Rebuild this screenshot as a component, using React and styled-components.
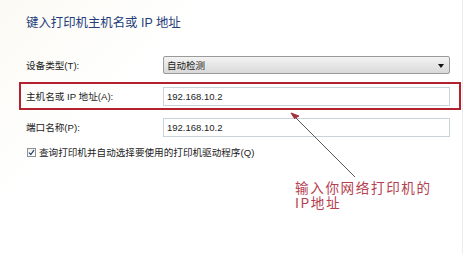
import React from "react";
import styled, { createGlobalStyle } from "styled-components";

const Global = createGlobalStyle`
  html, body { margin: 0; padding: 0; background: #fefefd; }
  body { font-family: "Liberation Sans", "Noto Sans CJK SC", sans-serif; }
`;

const Page = styled.div`
  position: relative;
  width: 463px;
  height: 254px;
  box-sizing: border-box;
  padding: 15px 0 0 19px;
  background: linear-gradient(135deg, #fbfaf4 0%, #ffffff 30%, #ffffff 100%);
  border-right: 1px solid #ececec;
  overflow: hidden;
`;

const Title = styled.h1`
  margin: 0 0 20px 7px;
  font-size: 12.4px;
  line-height: 16px;
  font-weight: normal;
  color: #233c7c;
  font-family: "Liberation Sans", "Noto Sans CJK SC", sans-serif;
`;

const Form = styled.div`
  display: flex;
  flex-direction: column;
  gap: 3px;
  width: 442px;
`;

const Row = styled.div`
  display: grid;
  grid-template-columns: 137px 287px;
  align-items: center;
  height: 28px;
  box-sizing: border-box;
  padding: 0 9px 0 5px;
  border: 2px solid ${(p) => (p.$highlight ? "#b3202e" : "transparent")};
`;

const Label = styled.label`
  font-size: 9.6px;
  color: #222;
  font-family: "Liberation Sans", "Noto Sans CJK SC", sans-serif;
`;

const Select = styled.div`
  position: relative;
  height: 18px;
  box-sizing: border-box;
  border: 1px solid #9a9a9a;
  border-radius: 2px;
  background: linear-gradient(#f3f3f3, #e6e6e6 50%, #d9d9d9);
  display: flex;
  align-items: center;
  padding-left: 3px;
  font-size: 9.5px;
  color: #222;
`;

const Caret = styled.span`
  position: absolute;
  right: 5px;
  top: 7px;
  width: 0;
  height: 0;
  border-left: 3px solid transparent;
  border-right: 3px solid transparent;
  border-top: 4px solid #111;
`;

const Input = styled.div`
  height: 19px;
  box-sizing: border-box;
  border: 1px solid #cbd3da;
  background: #fff;
  display: flex;
  align-items: center;
  padding-left: 3px;
  font-size: 9.5px;
  color: #222;
`;

const CheckRow = styled.div`
  display: flex;
  align-items: center;
  gap: 3px;
  margin: 4px 0 0 8px;
  font-size: 9.6px;
  color: #222;
`;

const Box = styled.span`
  width: 9px;
  height: 9px;
  box-sizing: border-box;
  border: 1px solid #8e8f8f;
  background: linear-gradient(#f0f0f0, #ffffff);
  display: flex;
  align-items: center;
  justify-content: center;
`;

const Note = styled.div`
  position: absolute;
  left: 295px;
  top: 180px;
  color: #b6404f;
  font-family: "Noto Sans CJK SC", sans-serif;
`;

const NoteLine = styled.div`
  font-size: 13.6px;
  height: 15px;
  line-height: 15px;
  letter-spacing: 1.6px;
  white-space: nowrap;
`;

const ArrowSvg = styled.svg`
  position: absolute;
  left: 0;
  top: 0;
  pointer-events: none;
`;

export default function App() {
  return (
    <>
      <Global />
      <Page>
        <Title>键入打印机主机名或 IP 地址</Title>
        <Form>
          <Row>
            <Label>设备类型(T):</Label>
            <Select>
              自动检测
              <Caret />
            </Select>
          </Row>
          <Row $highlight>
            <Label>主机名或 IP 地址(A):</Label>
            <Input>192.168.10.2</Input>
          </Row>
          <Row>
            <Label>端口名称(P):</Label>
            <Input>192.168.10.2</Input>
          </Row>
        </Form>
        <CheckRow>
          <Box>
            <svg width="7" height="7" viewBox="0 0 7 7">
              <path d="M1 3.6 L2.8 5.5 L6 1.2" fill="none" stroke="#2b3f6a" strokeWidth="1.2" />
            </svg>
          </Box>
          查询打印机并自动选择要使用的打印机驱动程序(Q)
        </CheckRow>
        <Note>
          <NoteLine>输入你网络打印机的</NoteLine>
          <NoteLine>IP地址</NoteLine>
        </Note>
        <ArrowSvg width="463" height="254" viewBox="0 0 463 254">
          <line x1="355" y1="177" x2="295" y2="117" stroke="#5a5a5a" strokeWidth="1" />
          <path d="M291 113 L299 116 L294.5 118.5 Z" fill="#a4303c" stroke="#a4303c" strokeWidth="1" />
        </ArrowSvg>
      </Page>
    </>
  );
}
